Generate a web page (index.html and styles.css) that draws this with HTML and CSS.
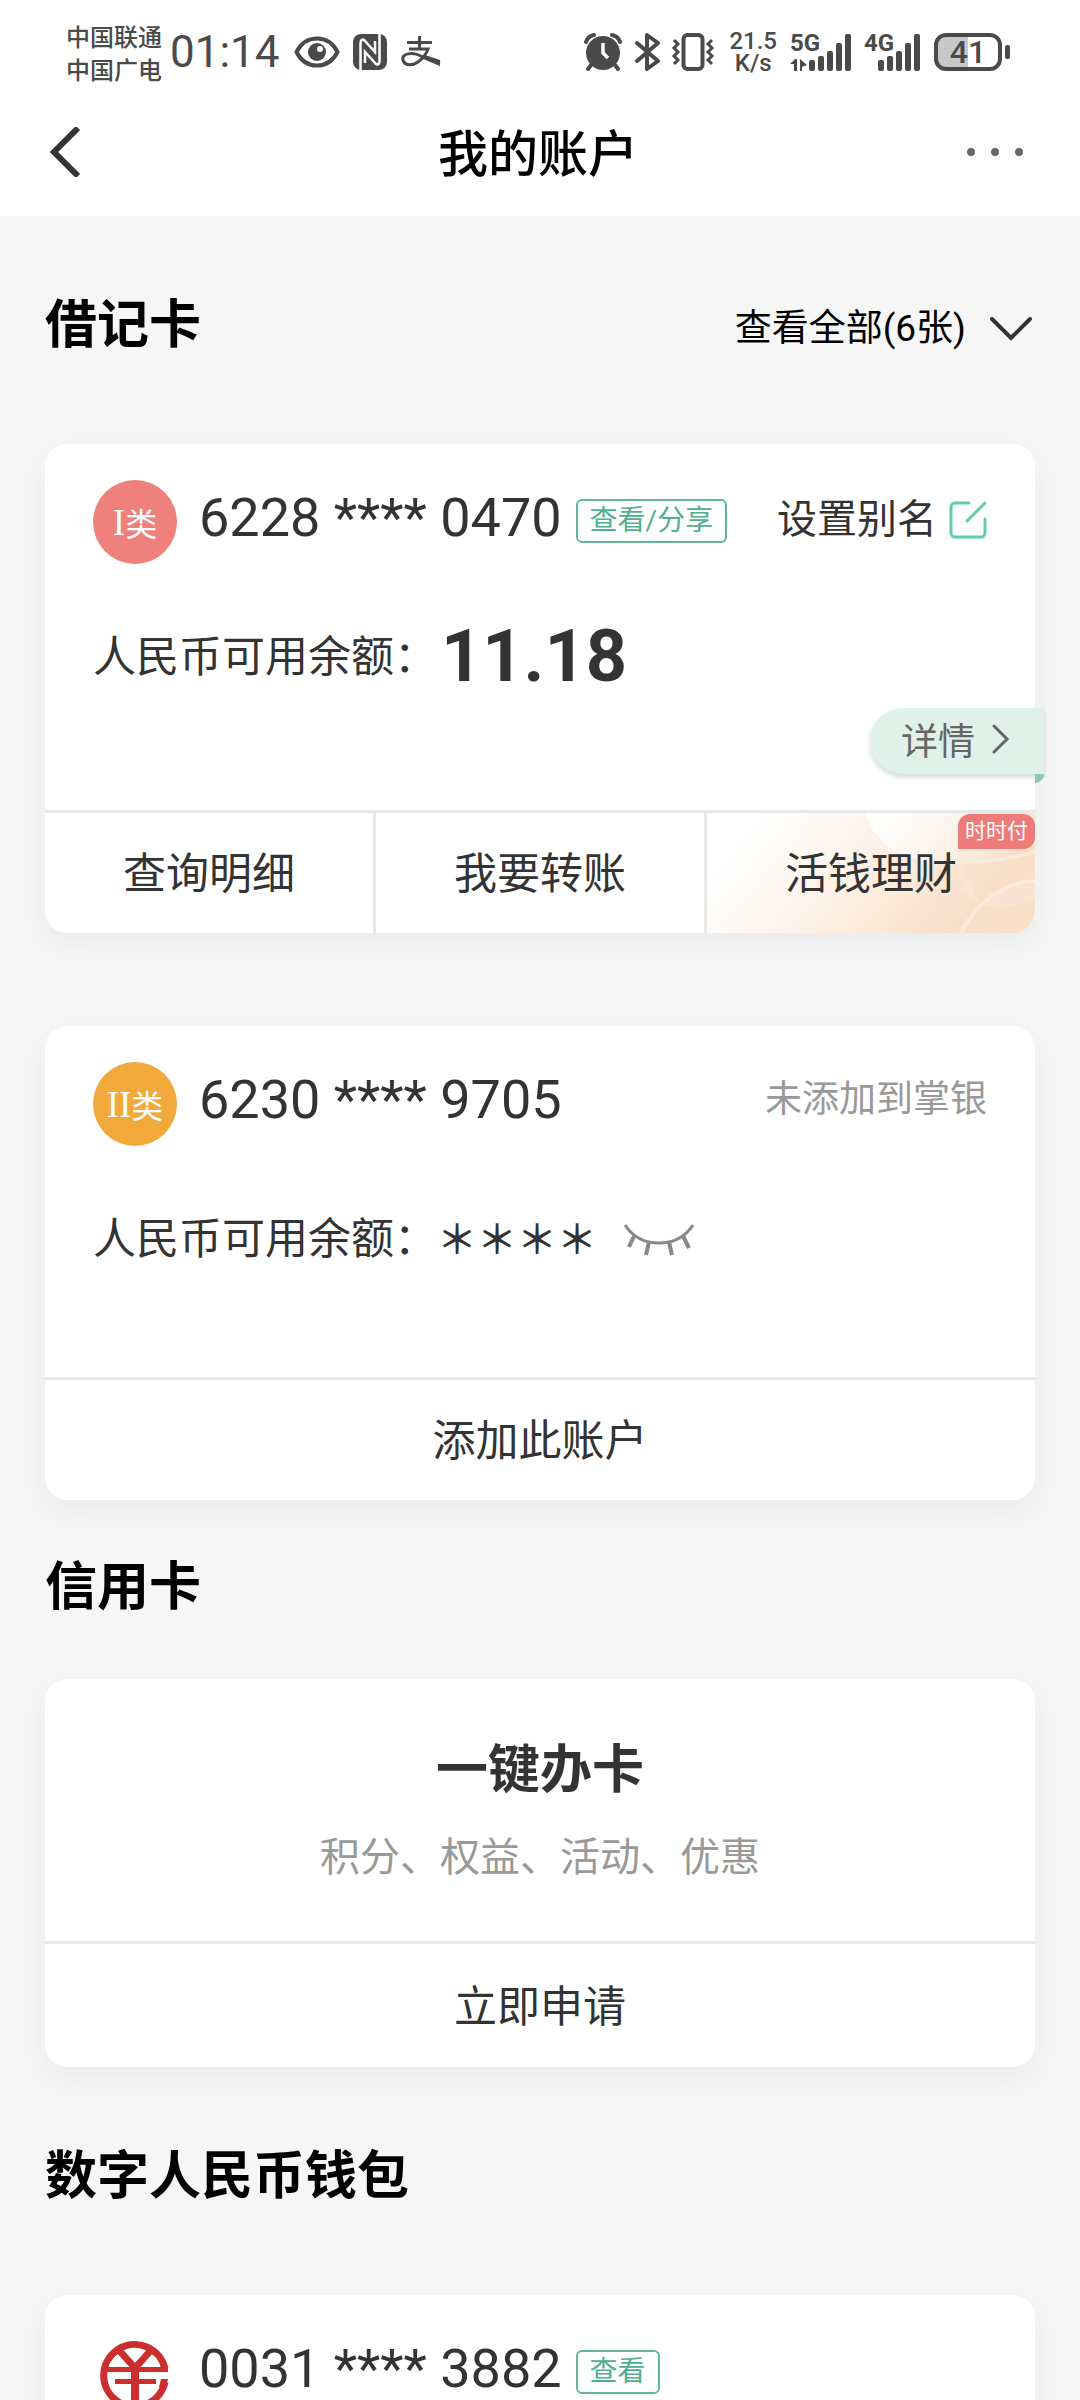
FILE: index.html
```html
<!DOCTYPE html>
<html lang="zh-CN">
<head>
  <meta charset="utf-8">
  <title>我的账户</title>
  <meta name="viewport" content="width=device-width, initial-scale=1.0">
  <link rel="stylesheet" href="styles.css">
</head>
<body>
  <!-- 状态栏 -->
  <div class="status">
    <div class="status-left">
      <div class="carrier">
        <span>中国联通</span>
        <span>中国广电</span>
      </div>
      <span class="time">01:14</span>
      <svg class="st-eye" width="46" height="32" viewBox="0 0 46 32">
        <path d="M2.500 16C7 7 14.500 2.500 23 2.500S39 7 43.500 16C39 25 31.500 29.500 23 29.500S7 25 2.500 16z" fill="none" stroke="#4a4a4a" stroke-width="4"/>
        <circle cx="23" cy="16" r="9" fill="#4a4a4a"/>
        <circle cx="26" cy="13" r="3" fill="#fff"/>
      </svg>
      <svg class="st-nfc" width="34" height="36" viewBox="0 0 34 36">
        <rect x="0" y="0" width="34" height="36" rx="8" fill="#4a4a4a"/>
        <path d="M7.500 36V9c0-3 2-4.500 4-2.500L22 18V7" fill="none" stroke="#fff" stroke-width="2.500"/>
        <path d="M26.500 0v27c0 3-2 4.500-4 2.500L12 18v11" fill="none" stroke="#fff" stroke-width="2.500"/>
      </svg>
      <svg class="st-pay" width="40" height="34" viewBox="0 0 40 34">
        <path d="M6 7.500h25M18.500 1v12M8 14h19c-2 6-6 10-10 13S4 32 2 25s10-8 18-4 12 5 19 7" fill="none" stroke="#4a4a4a" stroke-width="3"/>
        <path d="M24 20l15 5v6l-17-7z" fill="#4a4a4a"/>
      </svg>
    </div>
    <div class="status-right">
      <svg class="st-alarm" width="38" height="38" viewBox="0 0 38 38">
        <circle cx="19" cy="20" r="17" fill="#4a4a4a"/>
        <path d="M2 9c1-4 4-6 8-7M36 9c-1-4-4-6-8-7M7 32l-3 4M31 32l3 4" fill="none" stroke="#4a4a4a" stroke-width="4" stroke-linecap="round"/>
        <path d="M19 10v10l5 5" fill="none" stroke="#fff" stroke-width="3.500"/>
      </svg>
      <svg class="st-bt" width="28" height="38" viewBox="0 0 28 38">
        <path d="M3 10l21 18-11 8V2l11 8L3 28" fill="none" stroke="#4a4a4a" stroke-width="4" stroke-linecap="round" stroke-linejoin="round"/>
      </svg>
      <svg class="st-vib" width="44" height="38" viewBox="0 0 44 38">
        <rect x="12.500" y="2" width="19" height="34" rx="4" fill="none" stroke="#4a4a4a" stroke-width="4"/>
        <path d="M3 7l4 4-4 4 4 4-4 4 4 4-4 4M41 7l-4 4 4 4-4 4 4 4-4 4 4 4" fill="none" stroke="#4a4a4a" stroke-width="3"/>
      </svg>
      <div class="speed">
        <span>21.5</span>
        <span>K/s</span>
      </div>
      <svg class="signal" width="64" height="56" viewBox="0 -8 64 56">
        <text x="0" y="19" class="net">5G</text>
        <path d="M0 32l5-5h2v12H4v-7zM10 27l7 6-5 2v4h-2z" fill="#4a4a4a"/>
        <g fill="#4a4a4a">
          <rect x="19" y="28" width="6" height="11" rx="2"/>
          <rect x="28" y="24" width="6" height="15" rx="2"/>
          <rect x="37" y="19" width="6" height="20" rx="2"/>
          <rect x="46" y="11" width="6" height="28" rx="2"/>
          <rect x="55" y="2" width="6" height="37" rx="2"/>
        </g>
      </svg>
      <svg class="signal" width="60" height="56" viewBox="0 -8 60 56">
        <text x="0" y="19" class="net">4G</text>
        <g fill="#4a4a4a">
          <rect x="14" y="28" width="6" height="11" rx="2"/>
          <rect x="23" y="24" width="6" height="15" rx="2"/>
          <rect x="32" y="19" width="6" height="20" rx="2"/>
          <rect x="41" y="11" width="6" height="28" rx="2"/>
          <rect x="50" y="2" width="6" height="37" rx="2"/>
        </g>
      </svg>
      <div class="battery"><span>41</span></div>
    </div>
  </div>

  <!-- 导航栏 -->
  <header class="nav">
    <button class="nav-btn" aria-label="返回">
      <svg width="32" height="50" viewBox="0 0 32 50">
        <path d="M30 1L6 25l24 24" fill="none" stroke="#333" stroke-width="6"/>
      </svg>
    </button>
    <h1>我的账户</h1>
    <button class="nav-btn" aria-label="更多">
      <svg width="58" height="10" viewBox="0 0 58 10">
        <g fill="#666">
          <circle cx="5" cy="5" r="4"/>
          <circle cx="29" cy="5" r="4"/>
          <circle cx="53" cy="5" r="4"/>
        </g>
      </svg>
    </button>
  </header>

  <main>
    <div class="section-head">
      <h2>借记卡</h2>
      <button class="view-all">
        查看全部(6张)
        <svg width="42" height="24" viewBox="0 0 42 24">
          <path d="M2 2l19 19L40 2" fill="none" stroke="#333" stroke-width="4" stroke-linecap="round"/>
        </svg>
      </button>
    </div>

    <!-- I类账户 -->
    <section class="card">
      <div class="card-body">
        <div class="card-row">
          <span class="badge badge-1"><b>I</b>类</span>
          <span class="card-no">6228 **** 0470</span>
          <button class="tag">查看/分享</button>
          <button class="alias">
            设置别名
            <svg width="38" height="38" viewBox="0 0 38 38">
              <path d="M20 2H6a4 4 0 0 0-4 4v26a4 4 0 0 0 4 4h26a4 4 0 0 0 4-4V18M18 20L36 2" fill="none" stroke="#62cda9" stroke-width="3" stroke-linecap="round"/>
            </svg>
          </button>
        </div>
        <div class="balance">
          <span class="balance-label">人民币可用余额：</span>
          <span class="amount">11.18</span>
        </div>
        <a class="detail" href="#">
          详情
          <svg width="18" height="30" viewBox="0 0 18 30">
            <path d="M2 2l13 13L2 28" fill="none" stroke="#666" stroke-width="3" stroke-linecap="round"/>
          </svg>
        </a>
      </div>
      <div class="card-foot">
        <button>查询明细</button>
        <button>我要转账</button>
        <button class="finance">
          <svg class="finance-bg" viewBox="0 0 327 120" preserveAspectRatio="xMaxYMid slice">
            <defs>
              <linearGradient id="peach" x1="0" y1="0" x2="1" y2="0.300">
                <stop offset="0.150" stop-color="#fff"/>
                <stop offset="0.500" stop-color="#fef3e9"/>
                <stop offset="0.950" stop-color="#f9dfc8"/>
              </linearGradient>
              <linearGradient id="glow" x1="0" y1="0" x2="1" y2="0.200">
                <stop offset="0" stop-color="#fff"/>
                <stop offset="1" stop-color="#fff" stop-opacity="0"/>
              </linearGradient>
            </defs>
            <rect width="327" height="120" fill="url(#peach)"/>
            <path d="M158 0c8 26 28 50 84 50 30 0 60-3 85-12V0z" fill="url(#glow)"/>
            <path d="M242 50c30 0 60-3 85-12" fill="none" stroke="#fcebdc" stroke-width="3"/>
            <path d="M250 50c0 30 20 44 40 44 14 0 26-3 37-8V72c-20 0-40 8-52 20" fill="#fff" fill-opacity="0.150"/>
            <path d="M253 120c14-28 40-50 74-52" fill="none" stroke="#fcebdc" stroke-width="4"/>
          </svg>
          <span>活钱理财</span>
          <i class="corner">时时付</i>
        </button>
      </div>
    </section>

    <!-- II类账户 -->
    <section class="card card-next">
      <div class="card-body card-body-plain">
        <div class="card-row">
          <span class="badge badge-2"><b>II</b>类</span>
          <span class="card-no">6230 **** 9705</span>
          <span class="not-added">未添加到掌银</span>
        </div>
        <div class="balance">
          <span class="balance-label">人民币可用余额：</span>
          <span class="masked">＊＊＊＊</span>
          <button class="eye-btn" aria-label="显示余额">
            <svg width="70" height="36" viewBox="0 0 70 36">
              <path d="M1 2c8 12 20 18 34 18S61 14 69 2" fill="none" stroke="#888" stroke-width="3"/>
              <path d="M10 13L5 24M25 19l-3 13M45 19l3 13M59 13l6 12" fill="none" stroke="#888" stroke-width="4"/>
            </svg>
          </button>
        </div>
      </div>
      <div class="card-foot">
        <button>添加此账户</button>
      </div>
    </section>

    <div class="section-head section-head-tight">
      <h2>信用卡</h2>
    </div>

    <section class="card">
      <div class="promo">
        <h3>一键办卡</h3>
        <p>积分、权益、活动、优惠</p>
      </div>
      <div class="card-foot card-foot-tall">
        <button>立即申请</button>
      </div>
    </section>

    <div class="section-head">
      <h2>数字人民币钱包</h2>
    </div>

    <section class="card">
      <div class="card-body">
        <div class="card-row">
          <svg class="ecny" width="84" height="84" viewBox="0 0 84 84">
            <g fill="none" stroke="#cc2e30" stroke-width="7">
              <path d="M72 38A31 31 0 1 0 72 51"/>
              <path d="M9 38.500h66M22 50.500h41" stroke-width="5"/>
              <path d="M24 17l18 20 18-20"/>
              <path d="M42 36v38" stroke-width="8"/>
            </g>
            <path d="M68 48h7l-2 8h-7z" fill="#cc2e30"/>
          </svg>
          <span class="card-no">0031 **** 3882</span>
          <button class="tag">查看</button>
        </div>
      </div>
    </section>
  </main>
</body>
</html>
```

FILE: styles.css
```css
* { margin: 0; padding: 0; box-sizing: border-box; }
body {
  height: 100vh;
  overflow: hidden;
  font-family: Roboto, "Noto Sans CJK SC", sans-serif;
  color: #333;
  background: #f6f6f6;
}
button {
  font: inherit;
  color: inherit;
  background: none;
  border: none;
  cursor: pointer;
}
svg {
  display: block;
  flex: none;
}

/* 状态栏 */
.status {
  display: flex;
  justify-content: space-between;
  height: 88px;
  padding: 16px 78px 0 66px;
  background: #fff;
  color: #4a4a4a;
}
.status-left,
.status-right {
  display: flex;
  align-items: center;
}
.carrier {
  display: flex;
  flex-direction: column;
  padding-top: 6px;
  font-size: 24px;
  line-height: 33px;
  font-weight: 500;
}
.time {
  margin-left: 8px;
  font-size: 44px;
}
.st-eye { margin-left: 14px; }
.st-nfc { margin-left: 13px; }
.st-pay { margin-left: 14px; }
.st-bt { margin-left: 12px; }
.st-vib { margin-left: 9px; }
.speed {
  display: flex;
  flex-direction: column;
  align-items: center;
  margin: 0 13px 0 14px;
  font-size: 24px;
  line-height: 22px;
  font-weight: 500;
}
.signal { margin-right: 10px; }
.net {
  font-size: 24px;
  font-weight: 700;
  fill: #4a4a4a;
}
.battery {
  position: relative;
  width: 68px;
  height: 38px;
  border: 4px solid #4a4a4a;
  border-radius: 12px;
  background: linear-gradient(to right, #c8c8c8 50%, #fff 50%);
  font-size: 32px;
  line-height: 30px;
  text-align: center;
  font-weight: 500;
}
.battery::after {
  content: "";
  position: absolute;
  right: -12px;
  top: 8px;
  width: 5px;
  height: 14px;
  border-radius: 2px;
  background: #4a4a4a;
}

/* 导航栏 */
.nav {
  display: flex;
  align-items: center;
  justify-content: space-between;
  height: 128px;
  padding: 0 56px 0 48px;
  background: #fff;
}
.nav h1 {
  padding: 5px 0 0 4px;
  font-size: 50px;
  line-height: 72px;
  font-weight: 500;
  color: #000;
}
.nav-btn {
  display: flex;
  width: 60px;
}
.nav-btn:last-child { justify-content: flex-end; }

main { padding: 0 45px; }

.section-head {
  display: flex;
  align-items: center;
  justify-content: space-between;
  padding: 74px 0 82px;
}
.section-head-tight { padding: 52px 0 55px; }
h2 {
  font-size: 52px;
  line-height: 72px;
  font-weight: 700;
  color: #000;
}
.view-all {
  display: flex;
  align-items: center;
  gap: 24px;
  padding: 6px 3px 0 0;
  font-size: 37px;
  line-height: 56px;
  color: #000;
}

/* 卡片 */
.card {
  background: #fff;
  border-radius: 22px;
  box-shadow: 0 10px 30px rgba(0,0,0,0.05);
}
.card-next { margin-top: 93px; }
.card-body { padding: 36px 48px; }
.card-body-plain { padding-bottom: 102px; }
.card-row {
  display: flex;
  align-items: flex-start;
  height: 84px;
}
.badge {
  display: flex;
  align-items: center;
  justify-content: center;
  width: 84px;
  height: 84px;
  border-radius: 50%;
  font-size: 32px;
  color: #fff;
}
.badge b {
  font-family: "Liberation Serif", serif;
  font-size: 37px;
  font-weight: 400;
}
.badge-1 { background: #f0807c; }
.badge-2 { background: #f2a93c; }
.card-no {
  margin-left: 22px;
  font-size: 54px;
  line-height: 76px;
}
.tag {
  height: 44px;
  margin: 19px 0 0 14px;
  padding: 0 12px;
  border: 2px solid #5fb898;
  border-radius: 6px;
  font-size: 28px;
  line-height: 36px;
  color: #4fb08d;
}
.alias {
  display: flex;
  align-items: center;
  gap: 12px;
  margin-left: auto;
  font-size: 40px;
  line-height: 80px;
}
.not-added {
  margin-left: auto;
  font-size: 37px;
  line-height: 76px;
  color: #999;
}
.balance {
  display: flex;
  align-items: center;
  height: 72px;
  margin-top: 57px;
}
.balance-label {
  font-size: 43px;
  line-height: 72px;
}
.amount {
  margin-left: 4px;
  font-size: 72px;
  line-height: 72px;
  font-weight: 700;
}
.masked {
  padding-top: 4px;
  font-size: 40px;
  line-height: 72px;
  font-weight: 500;
}
.eye-btn {
  margin-left: 27px;
  padding-top: 4px;
}

/* 详情标签，右侧超出卡片 */
.detail {
  position: relative;
  display: flex;
  align-items: center;
  gap: 17px;
  width: 174px;
  height: 66px;
  margin: 15px -57px 0 auto;
  padding: 0 0 4px 31px;
  border-radius: 33px 0 0 33px;
  background: #dff1e8;
  box-shadow: 0 3px 5px rgba(0,80,50,0.2);
  font-size: 37px;
  color: #666;
  text-decoration: none;
}
.detail::after {
  content: "";
  position: absolute;
  right: 0;
  top: 66px;
  width: 9px;
  height: 9px;
  border-radius: 0 0 9px 0;
  background: #8ec8b0;
}

.card-foot {
  display: flex;
  border-top: 3px solid #e8e8e8;
}
.card-foot button {
  position: relative;
  flex: 1;
  height: 120px;
  padding-bottom: 6px;
  font-size: 43px;
}
.card-foot-tall button { height: 123px; }
.card-foot button + button { border-left: 3px solid #e8e8e8; }
.finance span { position: relative; }
.finance-bg {
  position: absolute;
  left: 0;
  top: 0;
  width: 100%;
  height: 100%;
  border-radius: 0 0 22px 0;
}
.corner {
  position: absolute;
  right: 0;
  top: 1px;
  padding: 0 7px;
  border-radius: 12px 12px 12px 0;
  background: #ee7b7a;
  color: #fff;
  font-size: 21px;
  line-height: 35px;
  font-style: normal;
}

.promo {
  padding: 56px 48px 55px;
  text-align: center;
}
.promo h3 {
  font-size: 52px;
  line-height: 72px;
}
.promo p {
  margin-top: 23px;
  font-size: 40px;
  line-height: 56px;
  color: #999;
}
```
